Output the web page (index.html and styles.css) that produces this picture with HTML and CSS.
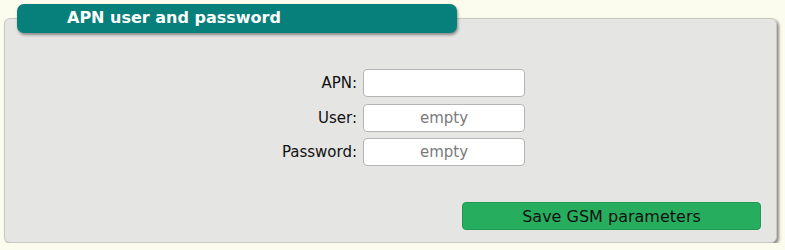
FILE: index.html
```html
<!DOCTYPE html>
<html>
<head>
<meta charset="utf-8">
<link rel="stylesheet" href="styles.css">
</head>
<body>
<div class="page">
  <section class="panel">
    <h2 class="tab">APN user and password</h2>
    <div class="form">
      <label class="lbl" for="apn">APN:</label>
      <input class="field" id="apn" type="text">
      <label class="lbl" for="user">User:</label>
      <input class="field" id="user" type="text" placeholder="empty">
      <label class="lbl" for="pass">Password:</label>
      <input class="field" id="pass" type="password" placeholder="empty">
    </div>
    <div class="actions">
      <button class="save">Save GSM parameters</button>
    </div>
  </section>
</div>
</body>
</html>
```
FILE: styles.css
```css
html, body {
  margin: 0;
  padding: 0;
  background: #fcfcee;
  font-family: "DejaVu Sans", Verdana, sans-serif;
}
.page {
  padding: 18px 8px 0 4px;
  width: 773px;
}
.panel {
  position: relative;
  box-sizing: border-box;
  height: 225px;
  background: #e5e5e3;
  border: 1px solid #c9c9c4;
  border-radius: 6px;
  box-shadow: 2px 2px 3px rgba(0,0,0,0.45);
  padding-top: 50px;
}
.tab {
  position: absolute;
  left: 12px;
  top: -15px;
  width: 440px;
  height: 29px;
  margin: 0;
  box-sizing: border-box;
  padding: 4px 0 0 50px;
  background: #077f7a;
  color: #fff;
  border-radius: 7px;
  font-size: 16px;
  font-weight: bold;
  line-height: 20px;
  box-shadow: 1px 2px 3px rgba(0,0,0,0.4);
}
.form {
  display: grid;
  grid-template-columns: 352px 162px;
  column-gap: 6px;
  row-gap: 6.5px;
  align-items: center;
}
.lbl {
  text-align: right;
  font-size: 15px;
  color: #111;
}
.field {
  box-sizing: border-box;
  height: 28px;
  width: 162px;
  margin: 0;
  border: 1px solid #b4b4b4;
  border-radius: 4px;
  background: #fff;
  font-family: "DejaVu Sans", Verdana, sans-serif;
  font-size: 15px;
  text-align: center;
}
.field::placeholder {
  color: #7a7a7a;
}
.actions {
  display: flex;
  justify-content: flex-end;
  padding: 36px 15px 0 0;
}
.save {
  box-sizing: border-box;
  width: 299px;
  height: 28px;
  margin: 0;
  background: #26ae5e;
  border: 1px solid #1f9a52;
  border-radius: 4px;
  color: #111;
  font-family: "DejaVu Sans", Verdana, sans-serif;
  font-size: 16px;
  padding: 0;
}
```
